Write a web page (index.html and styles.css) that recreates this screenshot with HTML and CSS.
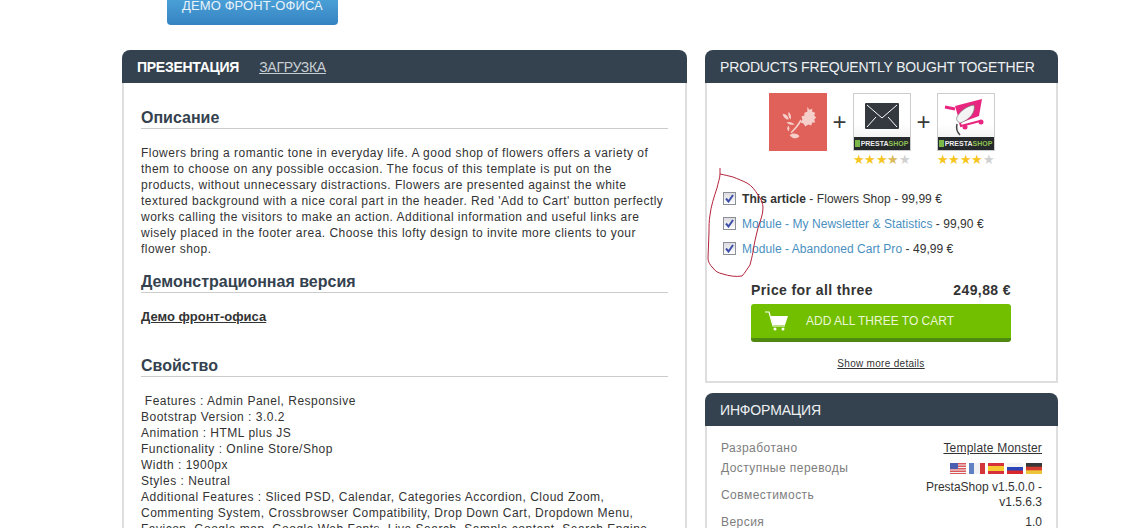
FILE: index.html
```html
<!DOCTYPE html>
<html lang="en">
<head>
    <meta charset="UTF-8">
    <meta name="viewport" content="width=device-width, initial-scale=1.0">
    <title>Flowers Shop</title>
    <link rel="stylesheet" href="styles.css">
</head>
<body>

    <div class="page">

        <!-- Demo button above the columns -->
        <div class="top-bar">
            <a class="demo-button" href="#">ДЕМО ФРОНТ-ОФИСА</a>
        </div>

        <div class="columns">

            <!-- Main Content -->
            <div class="panel main-panel">
                <div class="panel-head tabs">
                    <span class="tab-active">ПРЕЗЕНТАЦИЯ</span>
                    <a class="tab-link" href="#">ЗАГРУЗКА</a>
                </div>
                <div class="panel-body main-body">
                    <h2>Описание</h2>
                    <p class="intro">Flowers bring a romantic tone in everyday life. A good shop of flowers offers a variety of<br>
                    them to choose on any possible occasion. The focus of this template is put on the<br>
                    products, without unnecessary distractions. Flowers are presented against the white<br>
                    textured background with a nice coral part in the header. Red 'Add to Cart' button perfectly<br>
                    works calling the visitors to make an action. Additional information and useful links are<br>
                    wisely placed in the footer area. Choose this lofty design to invite more clients to your<br>
                    flower shop.</p>

                    <h2 class="demo-title">Демонстрационная версия</h2>
                    <p class="demo-link"><a href="#">Демо фронт-офиса</a></p>

                    <h2 class="features-title">Свойство</h2>
                    <p class="features">&nbsp;Features : Admin Panel, Responsive<br>
                    Bootstrap Version : 3.0.2<br>
                    Animation : HTML plus JS<br>
                    Functionality : Online Store/Shop<br>
                    Width : 1900px<br>
                    Styles : Neutral<br>
                    Additional Features : Sliced PSD, Calendar, Categories Accordion, Cloud Zoom, Commenting System, Crossbrowser Compatibility, Drop Down Cart, Dropdown Menu, Favicon, Google map, Google Web Fonts, Live Search, Sample content, Search Engine</p>
                </div>
            </div>

            <!-- Side Column -->
            <div class="side">

                <div class="panel bought-panel">
                    <div class="panel-head">PRODUCTS FREQUENTLY BOUGHT TOGETHER</div>
                    <div class="panel-body bought-body">

                        <div class="products">
                            <div class="product">
                                <div class="thumb thumb-flower">
                                    <svg width="57" height="57" viewBox="0 0 58 58">
                                        <g fill="#f6cfca">
                                            <path d="M39 14l2 3 3-1 0 3 3 1-1 3 2 2-2 2 1 3-3 0-1 3-3-1-3 2-2-3-3-1 2-3-1-3 3-1 0-3 3-1z"/>
                                            <path d="M33 28c-2 5-6 9-10 13l-1-1c4-4 7-8 10-13z"/>
                                            <path d="M14 21c3 0 6 3 6 6-3 0-6-3-6-6z"/>
                                            <path d="M20 19c2 2 3 5 2 8-2-2-3-5-2-8z"/>
                                            <path d="M18 30c3-1 6 0 8 2-3 1-6 0-8-2z"/>
                                            <path d="M20 33c1 2 1 4 0 6-2-2-2-4 0-6z"/>
                                            <path d="M21 43c3-3 8-2 10 1-3 3-7 3-10-1z"/>
                                        </g>
                                    </svg>
                                </div>
                            </div>
                            <span class="plus">+</span>
                            <div class="product">
                                <div class="thumb">
                                    <div class="thumb-art">
                                        <svg width="34" height="26" viewBox="0 0 34 26">
                                            <rect width="34" height="26" rx="1" fill="#33393f"/>
                                            <path d="M2 2l15 13L32 2M2 24l9-10M32 24l-9-10" fill="none" stroke="#fff" stroke-width="1"/>
                                        </svg>
                                    </div>
                                    <div class="presta"><i></i>PRESTA<b>SHOP</b></div>
                                </div>
                                <div class="stars"><span class="on">★★★</span><span class="half">★</span><span class="off">★</span></div>
                            </div>
                            <span class="plus">+</span>
                            <div class="product">
                                <div class="thumb">
                                    <div class="thumb-art">
                                        <svg width="56" height="43" viewBox="0 0 56 43">
                                            <path d="M7 13l10 2" fill="none" stroke="#e9267f" stroke-width="3"/>
                                            <path d="M17 12l27-7-3 17-19 7z" fill="#e9267f"/>
                                            <path d="M22 29l1 3 19-5" fill="none" stroke="#e9267f" stroke-width="2"/>
                                            <circle cx="43" cy="28" r="2.500" fill="#e9267f"/>
                                            <circle cx="27" cy="33" r="2.500" fill="#e9267f"/>
                                            <path d="M36 11c2 6-4 15-14 18-3-1-4-4-3-6 3-6 10-11 17-12z" fill="#f4f4f4" stroke="#777" stroke-width=".7"/>
                                            <path d="M19 30c-1 4 0 8 3 11" fill="none" stroke="#444" stroke-width="1.500"/>
                                        </svg>
                                    </div>
                                    <div class="presta"><i></i>PRESTA<b>SHOP</b></div>
                                </div>
                                <div class="stars"><span class="on">★★★★</span><span class="off">★</span></div>
                            </div>
                        </div>

                        <ul class="bought-list">
                            <li><span class="check"><svg width="9" height="9" viewBox="0 0 9 9"><path d="M1 4.500l2.500 3L8 1" fill="none" stroke="#3d4fa8" stroke-width="2"/></svg></span><span><strong>This article</strong> - Flowers Shop - 99,99 €</span></li>
                            <li><span class="check"><svg width="9" height="9" viewBox="0 0 9 9"><path d="M1 4.500l2.500 3L8 1" fill="none" stroke="#3d4fa8" stroke-width="2"/></svg></span><span><a href="#">Module - My Newsletter &amp; Statistics</a> - 99,90 €</span></li>
                            <li><span class="check"><svg width="9" height="9" viewBox="0 0 9 9"><path d="M1 4.500l2.500 3L8 1" fill="none" stroke="#3d4fa8" stroke-width="2"/></svg></span><span><a href="#">Module - Abandoned Cart Pro</a> - 49,99 €</span></li>
                        </ul>

                        <div class="price-row">
                            <span>Price for all three</span>
                            <span>249,88 €</span>
                        </div>
                        <a class="cart-button" href="#">
                            <svg width="24" height="20" viewBox="0 0 24 20">
                                <path d="M0 1h4l4 14h12" fill="none" stroke="#fff" stroke-width="1.200"/>
                                <path d="M5.500 5H23l-3 9H8z" fill="#fff"/>
                                <circle cx="10" cy="18" r="1.500" fill="#fff"/>
                                <circle cx="18" cy="18" r="1.500" fill="#fff"/>
                            </svg>
                            <span>ADD ALL THREE TO CART</span>
                        </a>
                        <a class="more-details" href="#">Show more details</a>
                    </div>
                </div>

                <div class="panel info-panel">
                    <div class="panel-head">ИНФОРМАЦИЯ</div>
                    <div class="panel-body info-body">
                        <div class="info-row">
                            <span class="info-label">Разработано</span>
                            <span class="info-value"><a href="#">Template Monster</a></span>
                        </div>
                        <div class="info-row">
                            <span class="info-label">Доступные переводы</span>
                            <span class="flags">
                                <svg width="16" height="11" viewBox="0 0 16 11"><rect width="16" height="11" fill="#d9565a"/><path d="M0 2h16M0 4.500h16M0 7h16M0 9.500h16" stroke="#f3f3f3" stroke-width="1.200"/><rect width="8" height="6" fill="#4a5fb0"/></svg>
                                <svg width="16" height="11" viewBox="0 0 16 11"><rect width="16" height="11" fill="#f1f1f4"/><rect width="5" height="11" fill="#5f81c4"/><rect x="11" width="5" height="11" fill="#d2353a"/></svg>
                                <svg width="16" height="11" viewBox="0 0 16 11"><rect width="16" height="11" fill="#d6303a"/><rect y="3" width="16" height="5" fill="#f6c930"/></svg>
                                <svg width="16" height="11" viewBox="0 0 16 11"><rect width="16" height="11" fill="#2b45b8"/><rect width="16" height="4" fill="#f3f3f3"/><rect y="7.500" width="16" height="3.500" fill="#d8282e"/></svg>
                                <svg width="16" height="11" viewBox="0 0 16 11"><rect width="16" height="11" fill="#d63b2f"/><rect width="16" height="3.700" fill="#383838"/><rect y="7.300" width="16" height="3.700" fill="#eec53a"/></svg>
                            </span>
                        </div>
                        <div class="info-row compat-row">
                            <span class="info-label">Совместимость</span>
                            <span class="info-value">PrestaShop v1.5.0.0 - v1.5.6.3</span>
                        </div>
                        <div class="info-row">
                            <span class="info-label">Версия</span>
                            <span class="info-value">1.0</span>
                        </div>
                    </div>
                </div>

            </div>
        </div>

        <!-- Hand-drawn red circle over the checkboxes -->
        <svg class="scribble" width="70" height="125" viewBox="700 165 70 125">
            <path d="M720 168v6c5 1 9 2 13 3 5 2 10 4 14 6 5 3 8 7 11 12 3 4 5 8 5 13 0 7-3 13-5 20-2 8-4 16-5 24-1 5-2 9-3 13-3 4-5 8-8 11-6 1-13 0-19-2-5-1-8-3-10-6-3-3-5-6-5-10 0-9 1-17 1-26 0-6 0-11 1-17 1-9 4-18 7-27 1-5 3-10 3-14" fill="none" stroke="#b3243c" stroke-width="1"/>
        </svg>

    </div>

</body>
</html>
```

FILE: styles.css
```css
* {
    margin: 0;
    padding: 0;
    box-sizing: border-box;
}

html, body {
    height: 528px;
    overflow: hidden;
}

body {
    font-family: "Liberation Sans", Arial, sans-serif;
    font-size: 12px;
    line-height: 16px;
    color: #333;
    background-color: #fff;
}

.page {
    position: relative;
    width: 1146px;
    height: 528px;
    padding: 0 88px 0 122px;
    overflow: hidden;
}

/* Top button */
.top-bar {
    height: 50px;
    padding-left: 45px;
}

.demo-button {
    display: block;
    width: 171px;
    height: 25px;
    text-align: center;
    font-size: 13px;
    line-height: 11px;
    letter-spacing: 0.1px;
    color: #e8f2fa;
    text-decoration: none;
    background: linear-gradient(#4a9fd6, #3583c2);
    border-radius: 0 0 4px 4px;
}

/* Columns */
.columns {
    display: flex;
    gap: 18px;
    align-items: flex-start;
}

.main-panel {
    width: 565px;
    flex: none;
}

.side {
    width: 353px;
    flex: none;
}

.panel-head {
    height: 33px;
    padding: 0 15px;
    font-size: 14px;
    line-height: 34px;
    letter-spacing: -0.15px;
    color: #eef0f2;
    background-color: #34424f;
    border-radius: 8px 8px 0 0;
}

.panel-body {
    border: 2px solid #dedede;
    border-top: none;
}

/* Left panel */
.tabs {
    display: flex;
    gap: 20px;
    letter-spacing: -0.27px;
}

.tab-active {
    font-weight: bold;
    color: #fff;
}

.tab-link {
    color: #c9ced3;
}

.main-body {
    padding: 24px 17px 0;
    height: 600px;
}

h2 {
    font-size: 16px;
    line-height: 21px;
    color: #34424f;
    border-bottom: 1px solid #ccc;
    margin-bottom: 16px;
}

h2.demo-title {
    margin-top: 14px;
}

h2.features-title {
    margin-top: 30px;
}

.intro {
    letter-spacing: 0.48px;
    white-space: nowrap;
}

.features {
    letter-spacing: 0.5px;
}

.demo-link a {
    font-size: 13px;
    font-weight: bold;
    color: #333;
}

/* Products frequently bought together */
.bought-body {
    height: 300px;
    padding: 10px 0 0 16px;
}

.products {
    display: flex;
    justify-content: center;
    align-items: flex-start;
    padding-right: 16px;
    height: 75px;
}

.product {
    width: 58px;
}

.thumb {
    width: 58px;
    height: 58px;
    border: 1px solid #ccc;
    display: flex;
    flex-direction: column;
    background: linear-gradient(#fff 55%, #e6e6e6);
}

.thumb-flower {
    border: none;
    background: #e0605a;
}

.thumb-art {
    flex: 1;
    display: flex;
    align-items: center;
    justify-content: center;
}

.presta {
    height: 13px;
    font-size: 7px;
    line-height: 13px;
    font-weight: bold;
    color: #eee;
    text-align: center;
    background-color: #26292b;
    white-space: nowrap;
}

.presta i {
    display: inline-block;
    width: 5px;
    height: 7px;
    margin-right: 1px;
    background-color: #7ab648;
    vertical-align: -1px;
}

.presta b {
    color: #8cc152;
}

.plus {
    width: 26px;
    text-align: center;
    font-size: 24px;
    line-height: 58px;
    color: #3a3a3a;
}

.stars {
    margin-top: 2px;
    font-size: 13px;
    line-height: 14px;
    text-align: center;
    letter-spacing: -0.6px;
    white-space: nowrap;
}

.stars .on {
    color: #f7c520;
}

.stars .half {
    color: #d9b95a;
}

.stars .off {
    color: #d0d0d0;
}

.bought-list {
    list-style: none;
    margin-top: 18px;
    letter-spacing: 0.05px;
}

.bought-list li {
    display: flex;
    align-items: center;
    height: 25px;
}

.bought-list a {
    color: #4a90bf;
    text-decoration: none;
}

.check {
    display: flex;
    align-items: center;
    justify-content: center;
    width: 13px;
    height: 13px;
    margin-right: 6px;
    border: 1px solid #8a8f98;
    background: linear-gradient(#dcdce0, #fff);
}

.price-row {
    display: flex;
    justify-content: space-between;
    width: 260px;
    margin: 21px 0 0 28px;
    font-size: 14px;
    line-height: 16px;
    font-weight: bold;
    color: #333;
    letter-spacing: 0.4px;
}

.cart-button {
    display: flex;
    align-items: center;
    gap: 17px;
    width: 260px;
    height: 38px;
    margin: 6px 0 0 28px;
    padding-left: 14px;
    font-size: 12px;
    color: #eaf6d5;
    text-decoration: none;
    background-color: #72bf00;
    border-bottom: 4px solid #4f8a10;
    border-radius: 3px;
}

.more-details {
    display: block;
    width: 260px;
    margin: 15px 0 0 28px;
    text-align: center;
    font-size: 10px;
    line-height: 14px;
    letter-spacing: 0.3px;
    color: #333;
}

/* Info panel */
.info-panel {
    margin-top: 10px;
}

.info-body {
    height: 200px;
    padding: 12px 14px 0 14px;
}

.info-row {
    display: flex;
    align-items: center;
    justify-content: space-between;
    min-height: 20px;
}

.compat-row {
    min-height: 34px;
}

.info-label {
    color: #7d7d7d;
    white-space: nowrap;
    letter-spacing: 0.45px;
}

.info-value {
    width: 130px;
    text-align: right;
    line-height: 15px;
}

.info-value a {
    color: #333;
    letter-spacing: 0.2px;
    white-space: nowrap;
}

.flags {
    display: flex;
    gap: 3px;
}

/* Annotation drawn over the page */
.scribble {
    position: absolute;
    left: 700px;
    top: 165px;
}
```
